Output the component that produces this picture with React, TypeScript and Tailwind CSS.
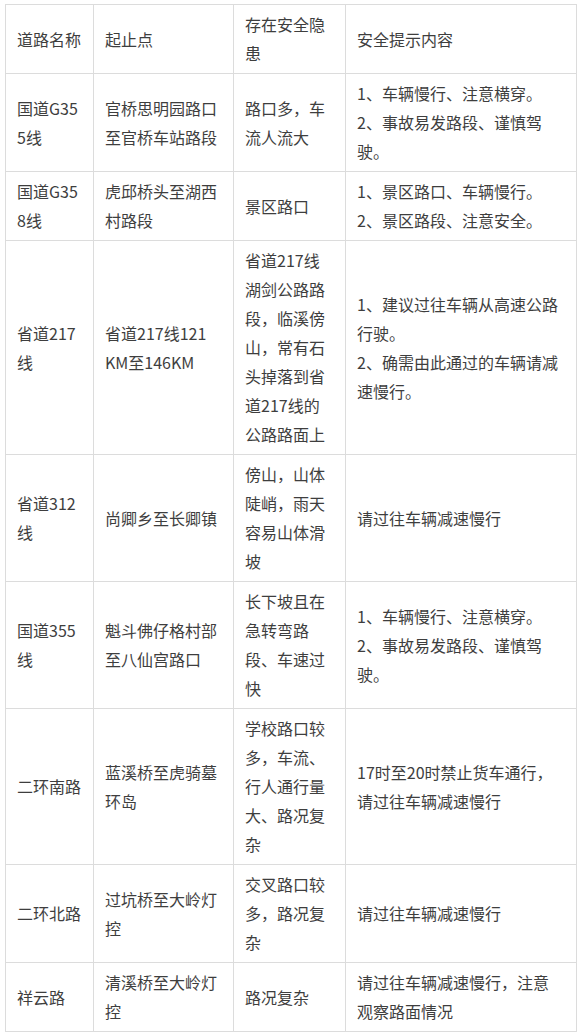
import React from "react";

type Row = {
  name: string[];
  range: string[];
  risk: string[];
  tip: string[];
};

const rows: Row[] = [
  {
    name: ["国道G35", "5线"],
    range: ["官桥思明园路口", "至官桥车站路段"],
    risk: ["路口多，车", "流人流大"],
    tip: ["1、车辆慢行、注意横穿。", "2、事故易发路段、谨慎驾", "驶。"],
  },
  {
    name: ["国道G35", "8线"],
    range: ["虎邱桥头至湖西", "村路段"],
    risk: ["景区路口"],
    tip: ["1、景区路口、车辆慢行。", "2、景区路段、注意安全。"],
  },
  {
    name: ["省道217", "线"],
    range: ["省道217线121", "KM至146KM"],
    risk: [
      "省道217线",
      "湖剑公路路",
      "段，临溪傍",
      "山，常有石",
      "头掉落到省",
      "道217线的",
      "公路路面上",
    ],
    tip: ["1、建议过往车辆从高速公路", "行驶。", "2、确需由此通过的车辆请减", "速慢行。"],
  },
  {
    name: ["省道312", "线"],
    range: ["尚卿乡至长卿镇"],
    risk: ["傍山，山体", "陡峭，雨天", "容易山体滑", "坡"],
    tip: ["请过往车辆减速慢行"],
  },
  {
    name: ["国道355", "线"],
    range: ["魁斗佛仔格村部", "至八仙宫路口"],
    risk: ["长下坡且在", "急转弯路", "段、车速过", "快"],
    tip: ["1、车辆慢行、注意横穿。", "2、事故易发路段、谨慎驾", "驶。"],
  },
  {
    name: ["二环南路"],
    range: ["蓝溪桥至虎骑墓", "环岛"],
    risk: ["学校路口较", "多，车流、", "行人通行量", "大、路况复", "杂"],
    tip: ["17时至20时禁止货车通行，", "请过往车辆减速慢行"],
  },
  {
    name: ["二环北路"],
    range: ["过坑桥至大岭灯", "控"],
    risk: ["交叉路口较", "多，路况复", "杂"],
    tip: ["请过往车辆减速慢行"],
  },
  {
    name: ["祥云路"],
    range: ["清溪桥至大岭灯", "控"],
    risk: ["路况复杂"],
    tip: ["请过往车辆减速慢行，注意", "观察路面情况"],
  },
];

function Lines({ lines }: { lines: string[] }) {
  return (
    <>
      {lines.map((l, i) => (
        <React.Fragment key={i}>
          {i > 0 && <br />}
          {l}
        </React.Fragment>
      ))}
    </>
  );
}

const cell =
  "border border-[#dcdcdc] px-[11px] py-[5px] align-middle whitespace-nowrap overflow-hidden";

export default function App() {
  return (
    <div className="min-h-[1036px] bg-white pl-[5px] pt-[4px]">
      <table
        className="table-fixed border-collapse text-[16px] leading-[29px] text-[#3e3e3e]"
        style={{ width: 571 }}
      >
        <colgroup>
          <col className="w-[88px]" />
          <col className="w-[140px]" />
          <col className="w-[112px]" />
          <col className="w-[231px]" />
        </colgroup>
        <tbody className="font-['Microsoft_YaHei','Noto_Sans_CJK_SC',sans-serif]">
          <tr>
            <td className={cell}>道路名称</td>
            <td className={cell}>起止点</td>
            <td className={cell}>
              <Lines lines={["存在安全隐", "患"]} />
            </td>
            <td className={cell}>安全提示内容</td>
          </tr>
          {rows.map((r, i) => (
            <tr key={i}>
              <td className={cell}>
                <Lines lines={r.name} />
              </td>
              <td className={cell}>
                <Lines lines={r.range} />
              </td>
              <td className={cell}>
                <Lines lines={r.risk} />
              </td>
              <td className={cell}>
                <Lines lines={r.tip} />
              </td>
            </tr>
          ))}
        </tbody>
      </table>
    </div>
  );
}
